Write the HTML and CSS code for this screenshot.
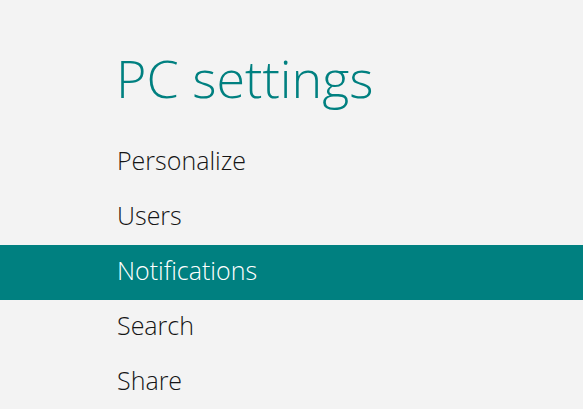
FILE: index.html
```html
<!DOCTYPE html>
<html lang="en">
<head>
    <meta charset="UTF-8">
    <title>PC settings</title>
    <link rel="stylesheet" href="styles.css">
</head>
<body>
    <div class="settings">
        <h1 class="title">PC settings</h1>
        <ul class="menu">
            <li class="menu-item">Personalize</li>
            <li class="menu-item">Users</li>
            <li class="menu-item active">Notifications</li>
            <li class="menu-item">Search</li>
            <li class="menu-item">Share</li>
        </ul>
    </div>
</body>
</html>
```

FILE: styles.css
```css
:root {
    --accent-color: #008080;
    --bg-color: #f3f3f3;
    --text-color: #151515;
}

body {
    margin: 0;
    padding: 0;
    background-color: var(--bg-color);
    font-family: 'Segoe UI', 'Open Sans', 'Noto Sans', sans-serif;
    font-weight: 300;
    color: var(--text-color);
    height: 409px;
    overflow: hidden;
}

.title {
    margin: 0;
    padding: 43px 0 0 116px;
    height: 135px;
    box-sizing: border-box;
    font-size: 52px;
    font-weight: 300;
    line-height: 70px;
    color: var(--accent-color);
}

.menu {
    list-style: none;
    margin: 0;
    padding: 0;
}

.menu-item {
    height: 55px;
    box-sizing: border-box;
    padding: 0 0 6px 117px;
    display: flex;
    align-items: center;
    font-size: 25px;
}

.menu-item.active {
    background-color: var(--accent-color);
    color: #fff;
}
```
